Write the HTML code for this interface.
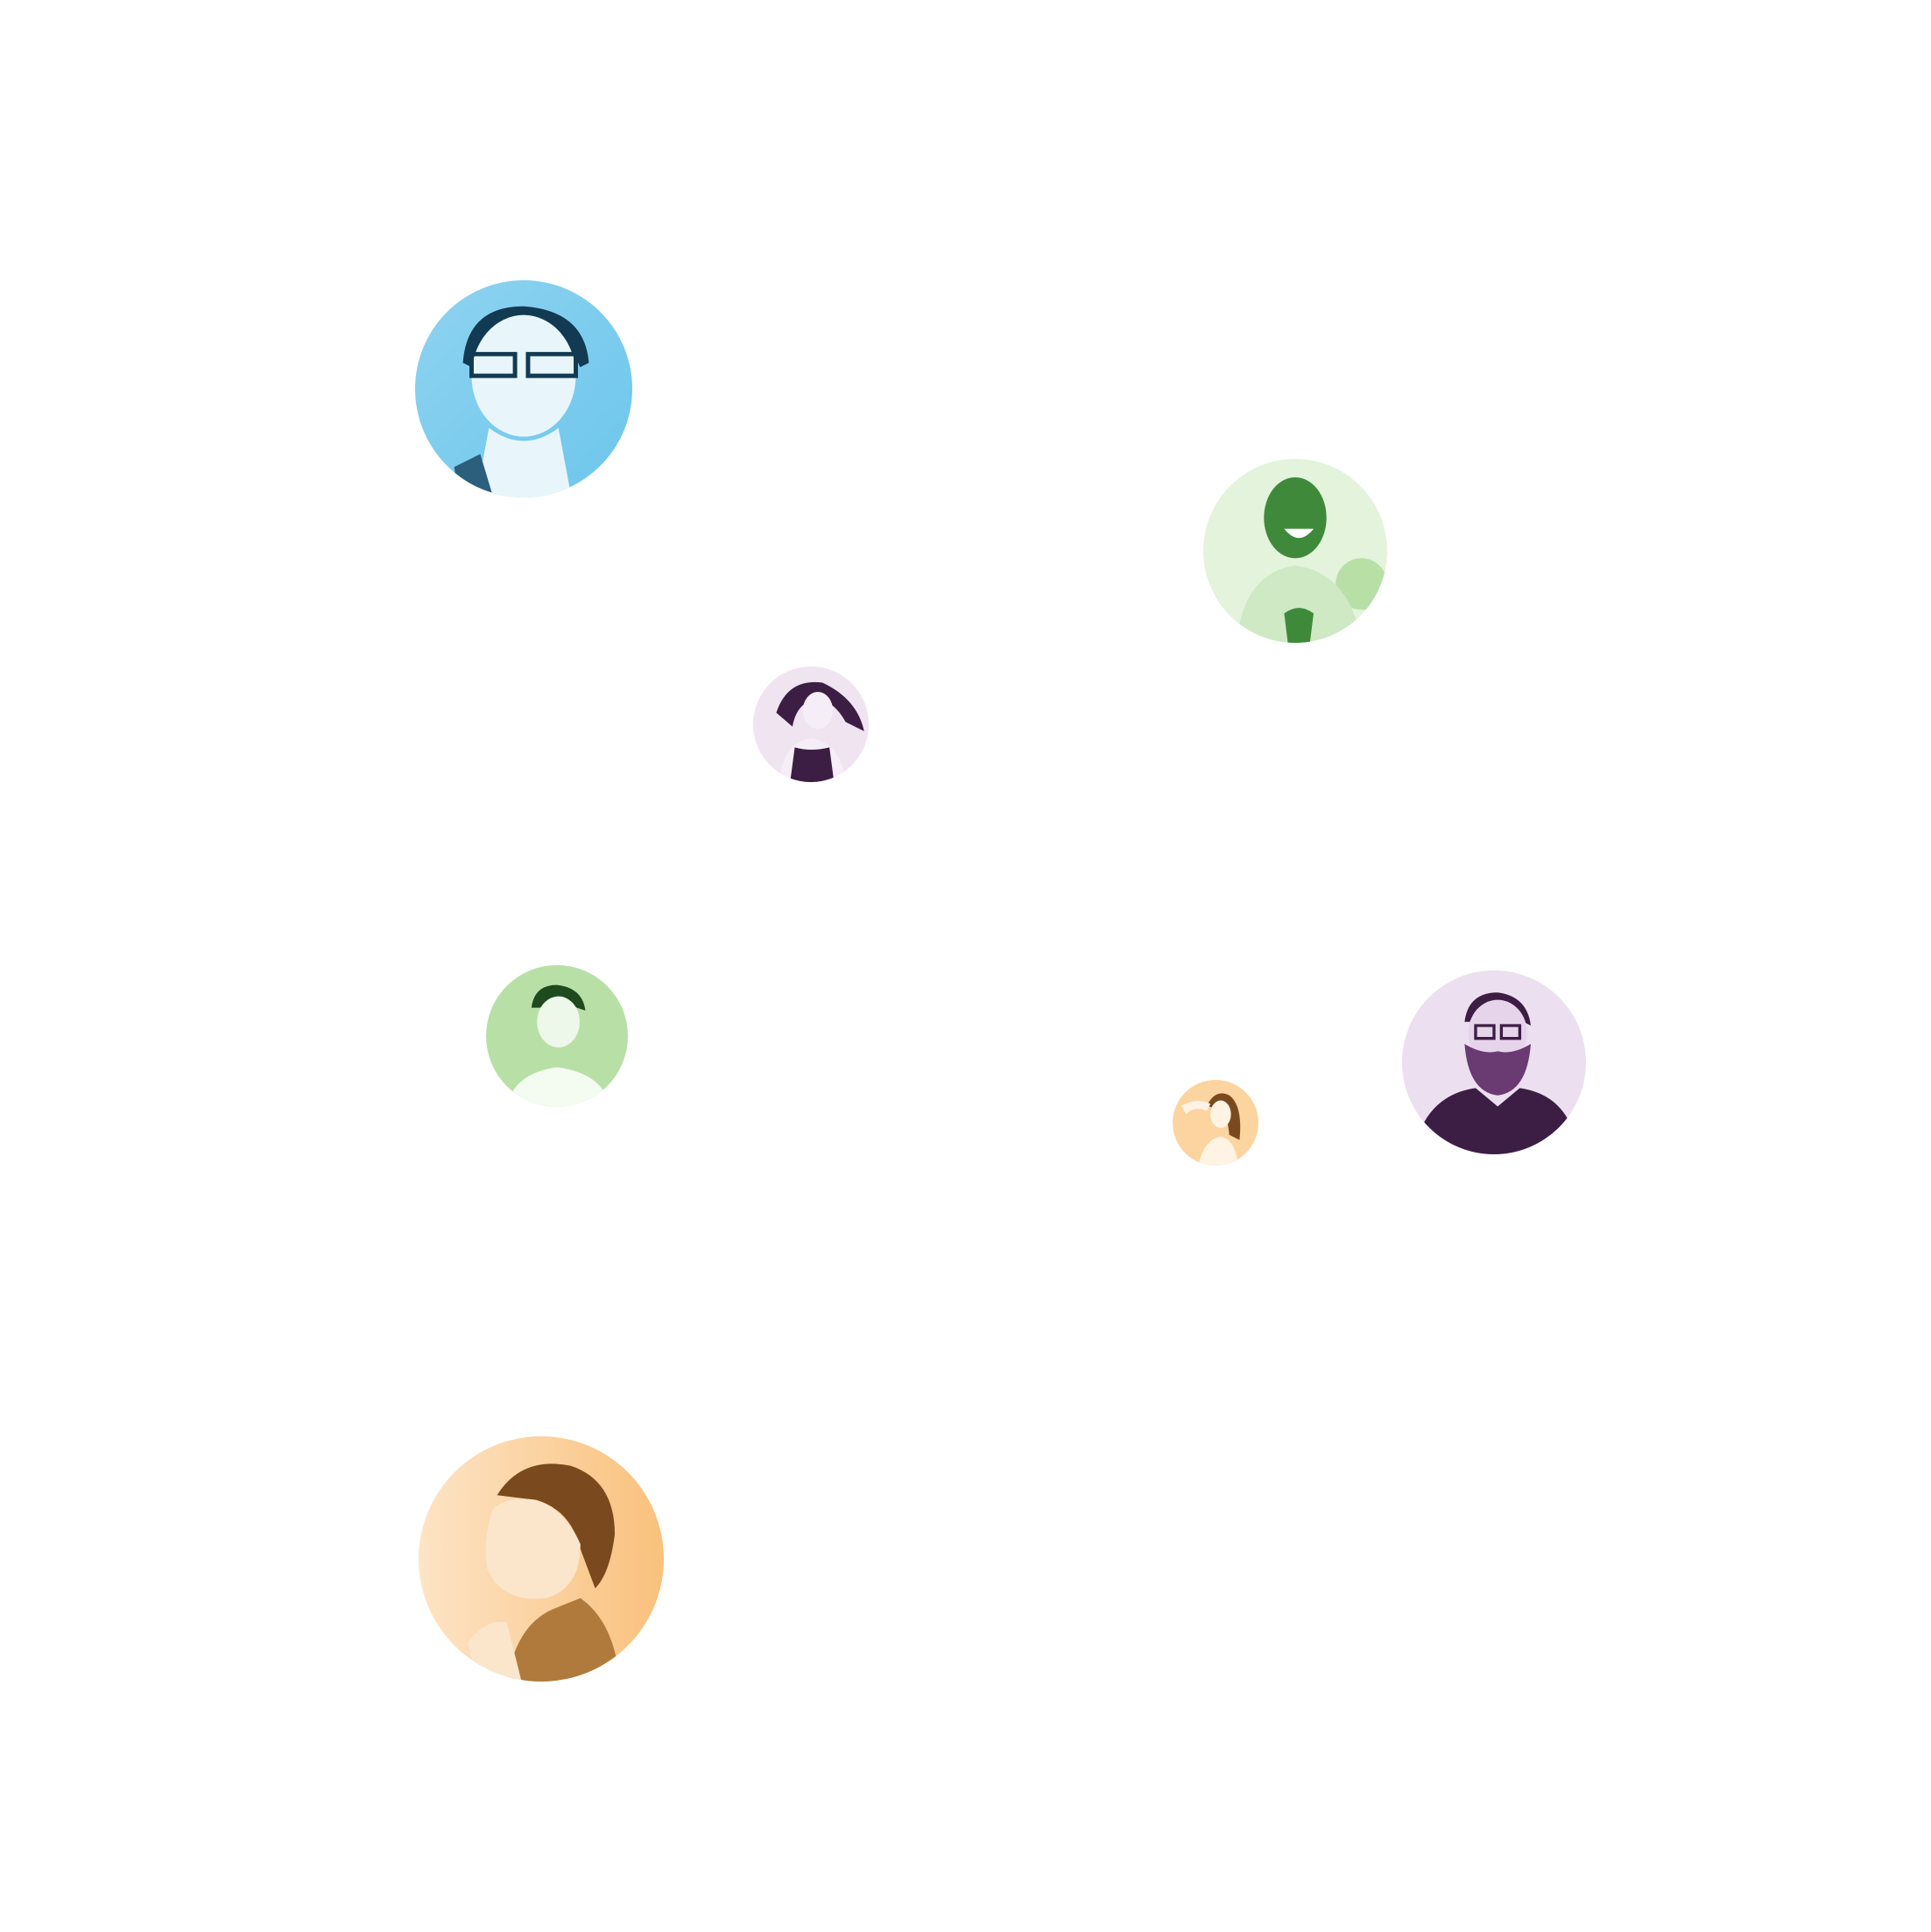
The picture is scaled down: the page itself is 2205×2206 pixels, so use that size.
<!DOCTYPE html>
<html><head><meta charset="utf-8">
<style>
html,body{margin:0;padding:0;background:#fff;width:2205px;height:2206px;overflow:hidden;position:relative}
.c{position:absolute;border-radius:50%;overflow:hidden}
.c svg{width:100%;height:100%;display:block}
</style></head><body>

<div class="c" style="left:474px;top:320px;width:248px;height:248px">
<svg viewBox="0 0 100 100"><defs><linearGradient id="g1" x1="0" y1="0" x2="1" y2="1"><stop offset="0" stop-color="#8fd3f0"/><stop offset="1" stop-color="#6cc6ec"/></linearGradient></defs>
<rect width="100" height="100" fill="url(#g1)"/>
<path d="M22 38 Q24 12 50 12 Q78 14 80 38 L76 40 Q70 26 50 24 Q32 26 26 40Z" fill="#123a52"/>
<ellipse cx="50" cy="44" rx="24" ry="28" fill="#e8f6fc"/>
<path d="M26 34 h20 v10 h-20z M52 34 h22 v10 h-22z" fill="none" stroke="#123a52" stroke-width="2"/>
<path d="M34 68 Q50 80 66 68 L72 100 L28 100Z" fill="#e8f6fc"/>
<path d="M18 86 L30 80 L36 100 L20 100Z" fill="#2b5f7c"/>
</svg></div>

<div class="c" style="left:1374px;top:524px;width:210px;height:210px">
<svg viewBox="0 0 100 100"><rect width="100" height="100" fill="#e3f3dc"/>
<circle cx="86" cy="68" r="14" fill="#b8e0a6"/>
<ellipse cx="50" cy="32" rx="17" ry="22" fill="#3f8a3a"/>
<path d="M44 38 Q52 48 60 38 Z" fill="#fff"/>
<path d="M18 100 Q22 62 50 58 Q80 62 86 100Z" fill="#cfe9c4"/>
<path d="M44 84 Q52 78 60 84 L58 100 L46 100Z" fill="#3f8a3a"/>
</svg></div>

<div class="c" style="left:860px;top:761px;width:132px;height:132px">
<svg viewBox="0 0 100 100"><rect width="100" height="100" fill="#efe4f0"/>
<path d="M20 40 Q30 10 60 14 Q90 28 96 56 L80 48 Q70 30 56 28 Q38 30 34 52Z" fill="#3c1e45"/>
<ellipse cx="56" cy="38" rx="13" ry="16" fill="#f6eef6"/>
<path d="M22 100 Q26 66 50 62 Q76 66 80 100Z" fill="#f6eef6"/>
<path d="M32 100 L36 70 Q50 74 66 70 L70 100Z" fill="#3c1e45"/>
</svg></div>

<div class="c" style="left:555px;top:1102px;width:162px;height:162px">
<svg viewBox="0 0 100 100"><rect width="100" height="100" fill="#b8e0a6"/>
<path d="M32 30 Q34 14 50 14 Q68 16 70 32 L64 30 Q50 22 38 30Z" fill="#1e4a1e"/>
<ellipse cx="51" cy="40" rx="15" ry="18" fill="#eef8ea"/>
<path d="M14 100 Q20 76 50 72 Q82 76 88 100Z" fill="#f4fbf1"/>
</svg></div>

<div class="c" style="left:1339px;top:1233px;width:98px;height:98px">
<svg viewBox="0 0 100 100"><rect width="100" height="100" fill="#fcd4a0"/>
<path d="M40 30 Q50 10 66 18 Q82 30 78 70 L66 64 Q64 40 56 36Z" fill="#7a4a1e"/>
<ellipse cx="56" cy="40" rx="12" ry="16" fill="#fff3e4"/>
<path d="M30 100 Q36 70 56 66 Q74 70 76 100Z" fill="#fff3e4"/>
<path d="M10 30 Q30 20 44 28 L40 36 Q24 30 16 40Z" fill="#fff3e4"/>
</svg></div>

<div class="c" style="left:1601px;top:1108px;width:210px;height:210px">
<svg viewBox="0 0 100 100"><rect width="100" height="100" fill="#ecdff0"/>
<path d="M34 28 Q36 12 52 12 Q68 14 70 30 L66 28 Q52 20 38 28Z" fill="#3c1e45"/>
<ellipse cx="52" cy="34" rx="16" ry="18" fill="#e6d4ea"/>
<path d="M40 30 h10 v7 h-10z M54 30 h10 v7 h-10z" fill="none" stroke="#3c1e45" stroke-width="1.6"/>
<path d="M34 40 Q36 66 52 68 Q68 66 70 40 Q60 46 52 44 Q44 46 34 40Z" fill="#6a3b72"/>
<path d="M6 100 Q12 68 40 64 L52 74 L64 64 Q92 68 96 100Z" fill="#3c1e45"/>
</svg></div>

<div class="c" style="left:478px;top:1640px;width:280px;height:280px">
<svg viewBox="0 0 100 100"><defs><linearGradient id="g7" x1="0" y1="0" x2="1" y2="0"><stop offset="0" stop-color="#fde4c6"/><stop offset="1" stop-color="#f9c17c"/></linearGradient></defs>
<rect width="100" height="100" fill="url(#g7)"/>
<path d="M32 24 Q42 8 62 12 Q80 18 80 40 Q78 56 72 62 L66 46 Q62 30 48 26Z" fill="#7a4a1e"/>
<path d="M30 30 Q26 44 28 54 Q34 68 52 66 Q66 62 66 44 Q60 30 48 26 Q36 24 30 30Z" fill="#fbe6cc"/>
<path d="M36 100 Q40 76 56 70 L66 66 Q80 76 82 100Z" fill="#b07a3c"/>
<path d="M20 84 Q28 74 36 76 L42 100 L24 100Z" fill="#fbe6cc"/>
</svg></div>

</body></html>
